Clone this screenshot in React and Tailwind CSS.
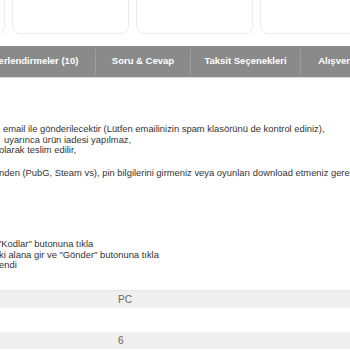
import React from 'react';

const tabs = [
  { label: 'Değerlendirmeler (10)', w: 'w-[131px]' },
  { label: 'Soru & Cevap', w: 'w-[94px]' },
  { label: 'Taksit Seçenekleri', w: 'w-[109px]' },
  { label: 'Alışveriş Güvenliği', w: 'w-[120px]' },
];

function App() {
  return (
    <div className="h-[350px] w-[350px] overflow-hidden bg-white font-['Liberation_Sans',Arial,sans-serif]">
      {/* product cards strip, cut at the top */}
      <div className="-mt-[40px] -ml-[112px] flex gap-[7px]">
        {[0, 1, 2, 3].map((i) => (
          <div key={i} className="h-[74px] w-[117px] shrink-0 rounded-[8px] border border-[#ececec] bg-white" />
        ))}
      </div>

      {/* tab bar */}
      <div className="mt-[12px] flex h-[32px] items-center overflow-hidden border-b border-[#dcdcdc] bg-[#8a8a8a]">
        <div className="-ml-[36px] flex items-center">
          {tabs.map((t, i) => (
            <React.Fragment key={t.label}>
              {i > 0 && <div className="h-[26px] w-px shrink-0 bg-[#9e9e9e]" />}
              <div className={`${t.w} shrink-0 whitespace-nowrap text-center text-[9.5px] font-bold text-white`}>{t.label}</div>
            </React.Fragment>
          ))}
        </div>
      </div>

      {/* description */}
      <div className="mt-[46px] whitespace-nowrap text-[9.4px] leading-[10.5px] text-[#333]">
        <div className="ml-[3px]">email ile gönderilecektir (Lütfen emailinizin spam klasörünü de kontrol ediniz),</div>
        <div className="ml-[4px]">uyarınca ürün iadesi yapılmaz,</div>
        <div className="-ml-[1px]">olarak teslim edilir,</div>
        <div className="mt-[12px] -ml-[1px]">nden (PubG, Steam vs), pin bilgilerini girmeniz veya oyunları download etmeniz gerekmektedir.</div>

        <div className="mt-[61px] -ml-[2px]">"Kodlar" butonuna tıkla</div>
        <div className="-ml-[1px]">ki alana gir ve "Gönder" butonuna tıkla</div>
        <div className="-ml-[1px]">endi</div>
      </div>

      {/* spec table */}
      <div className="mt-[19px] text-[10px] text-[#666]">
        <div className="flex h-[18px] items-center border-t border-[#e6e6e6] bg-[#efefef] pl-[118px]">PC</div>
        <div className="h-[24px] bg-white" />
        <div className="flex h-[17px] items-center bg-[#efefef] pl-[118px]">6</div>
      </div>
    </div>
  );
}

export default App;
